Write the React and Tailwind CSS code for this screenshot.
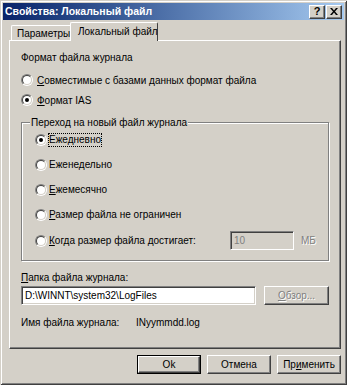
const font = { fontFamily: '"Liberation Sans", Arial, sans-serif' };

function Radio({ checked }) {
  return (
    <span className="inline-block h-[12px] w-[12px] shrink-0 rounded-full border border-t-[#808080] border-l-[#808080] border-r-white border-b-white">
      <span className="flex h-[10px] w-[10px] items-center justify-center rounded-full border border-t-[#404040] border-l-[#404040] border-r-[#d4d0c8] border-b-[#d4d0c8] bg-white">
        {checked && <span className="h-[4px] w-[4px] rounded-full bg-black" />}
      </span>
    </span>
  );
}

function U({ children }) {
  return <span className="underline underline-offset-[1px]">{children}</span>;
}

const raised =
  "border border-t-white border-l-white border-r-[#404040] border-b-[#404040] shadow-[inset_-1px_-1px_0_#808080]";
const sunken =
  "border border-t-[#808080] border-l-[#808080] border-r-white border-b-white shadow-[inset_1px_1px_0_#404040,inset_-1px_-1px_0_#d4d0c8]";
const disabledText = "text-[#808080] [text-shadow:1px_1px_0_#fff]";

function InnerRadio({ checked, focused, children }) {
  return (
    <div className="flex h-[16px] items-center gap-[1px]">
      <Radio checked={checked} />
      <span
        className={
          "border px-0 leading-[12px] " +
          (focused ? "border-dotted border-black" : "border-transparent")
        }
      >
        {children}
      </span>
    </div>
  );
}

export default function App() {
  return (
    <div
      className="flex h-[385px] w-[347px] flex-col whitespace-nowrap bg-[#d4d0c8] p-[3px] text-[10px] text-black shadow-[inset_1px_1px_0_#d4d0c8,inset_-1px_-1px_0_#404040,inset_2px_2px_0_#fff,inset_-2px_-2px_0_#808080]"
      style={font}
    >
      {/* title bar */}
      <div className="flex h-[17px] items-center bg-gradient-to-r from-[#0a246a] to-[#a6caf0] pl-[2px] pr-[2px]">
        <span className="flex-1 text-[10.5px] font-bold text-white">Свойства: Локальный файл</span>
        <div className={"flex h-[14px] w-[16px] items-center justify-center bg-[#d4d0c8] text-[11px] font-bold leading-none " + raised}>
          ?
        </div>
        <div className={"ml-[1px] flex h-[14px] w-[16px] items-center justify-center bg-[#d4d0c8] " + raised}>
          <svg width="8" height="7" viewBox="0 0 8 7">
            <path d="M0 0h2l2 2.5L6 0h2L5 3.5 8 7H6L4 4.5 2 7H0l3-3.5z" fill="#000" />
          </svg>
        </div>
      </div>

      {/* tabs */}
      <div className="mt-[2px] flex h-[18px] items-end pl-[8px]">
        <div className="flex h-[15px] w-[61px] items-center rounded-t-[2px] border-l border-t border-r border-l-white border-t-white border-r-[#404040] pl-[5px]">
          Параметры
        </div>
        <div className="relative z-10 -mb-[1px] -ml-[2px] flex h-[19px] w-[88px] items-center rounded-t-[2px] border-l border-t border-r border-l-white border-t-white border-r-[#404040] bg-[#d4d0c8] pl-[7px] pb-[2px]">
          Локальный файл
        </div>
      </div>

      {/* panel */}
      <div className="ml-[6px] flex h-[309px] w-[332px] flex-col border border-t-white border-l-white border-r-[#404040] border-b-[#404040] pl-[11px] pr-[11px] shadow-[inset_-1px_-1px_0_#808080]">
        <div className="mt-[10px] h-[13px] leading-[13px]">Формат файла журнала</div>
        <div className="mt-[8px] flex h-[16px] items-center gap-[4px]">
          <Radio />
          <span>
            <U>С</U>овместимые с базами данных формат файла
          </span>
        </div>
        <div className="mt-[4px] flex h-[16px] items-center gap-[4px]">
          <Radio checked />
          <span>
            <U>Ф</U>ормат IAS
          </span>
        </div>

        <fieldset className="mt-[8px] w-[308px] border border-[#808080] pb-[10px] pl-[13px] shadow-[inset_1px_1px_0_#fff,1px_1px_0_#fff]">
          <legend className="-ml-[5px] bg-[#d4d0c8] px-[1px] leading-[13px]">Переход на новый файл журнала</legend>
          <div className="mt-[3px] flex flex-col gap-[9px]">
            <InnerRadio checked focused>
              Ежедневно
            </InnerRadio>
            <InnerRadio>
              Ежене<U>д</U>ельно
            </InnerRadio>
            <InnerRadio>
              <U>Е</U>жемесячно
            </InnerRadio>
            <InnerRadio>
              <U>Р</U>азмер файла не ограничен
            </InnerRadio>
          </div>
          <div className="mt-[8px] flex h-[19px] items-center gap-[1px]">
            <Radio />
            <span className="w-[181px] border border-transparent leading-[12px]">
              <U>К</U>огда размер файла достигает:
            </span>
            <div className={"flex h-[19px] w-[64px] items-center bg-[#d4d0c8] pl-[3px] " + sunken}>
              <span className="text-[#808080]">10</span>
            </div>
            <span className={"ml-[6px] " + disabledText}>МБ</span>
          </div>
        </fieldset>

        <div className="mt-[10px] h-[13px] leading-[13px]">
          <U>П</U>апка файла журнала:
        </div>
        <div className="mt-[2px] flex h-[19px] items-center">
          <div className={"flex h-[19px] w-[235px] items-center bg-white pl-[3px] " + sunken}>
            D:\WINNT\system32\LogFiles
          </div>
          <div className={"ml-[8px] flex h-[19px] w-[65px] items-center justify-center " + raised}>
            <span className={disabledText}>
              <U>О</U>бзор...
            </span>
          </div>
        </div>
        <div className="mt-[11px] flex h-[13px] items-center leading-[13px]">
          <span className="w-[115px]">Имя файла журнала:</span>
          <span>INyymmdd.log</span>
        </div>
      </div>

      {/* buttons */}
      <div className="mt-[6px] flex justify-end gap-[6px] pr-[3px]">
        <div className="h-[19px] w-[64px] border border-black">
          <div className={"flex h-full w-full items-center justify-center " + raised}>Ok</div>
        </div>
        <div className={"flex h-[19px] w-[64px] items-center justify-center " + raised}>Отмена</div>
        <div className={"flex h-[19px] w-[64px] items-center justify-center " + raised}>
          <span>
            Пр<U>и</U>менить
          </span>
        </div>
      </div>
    </div>
  );
}
